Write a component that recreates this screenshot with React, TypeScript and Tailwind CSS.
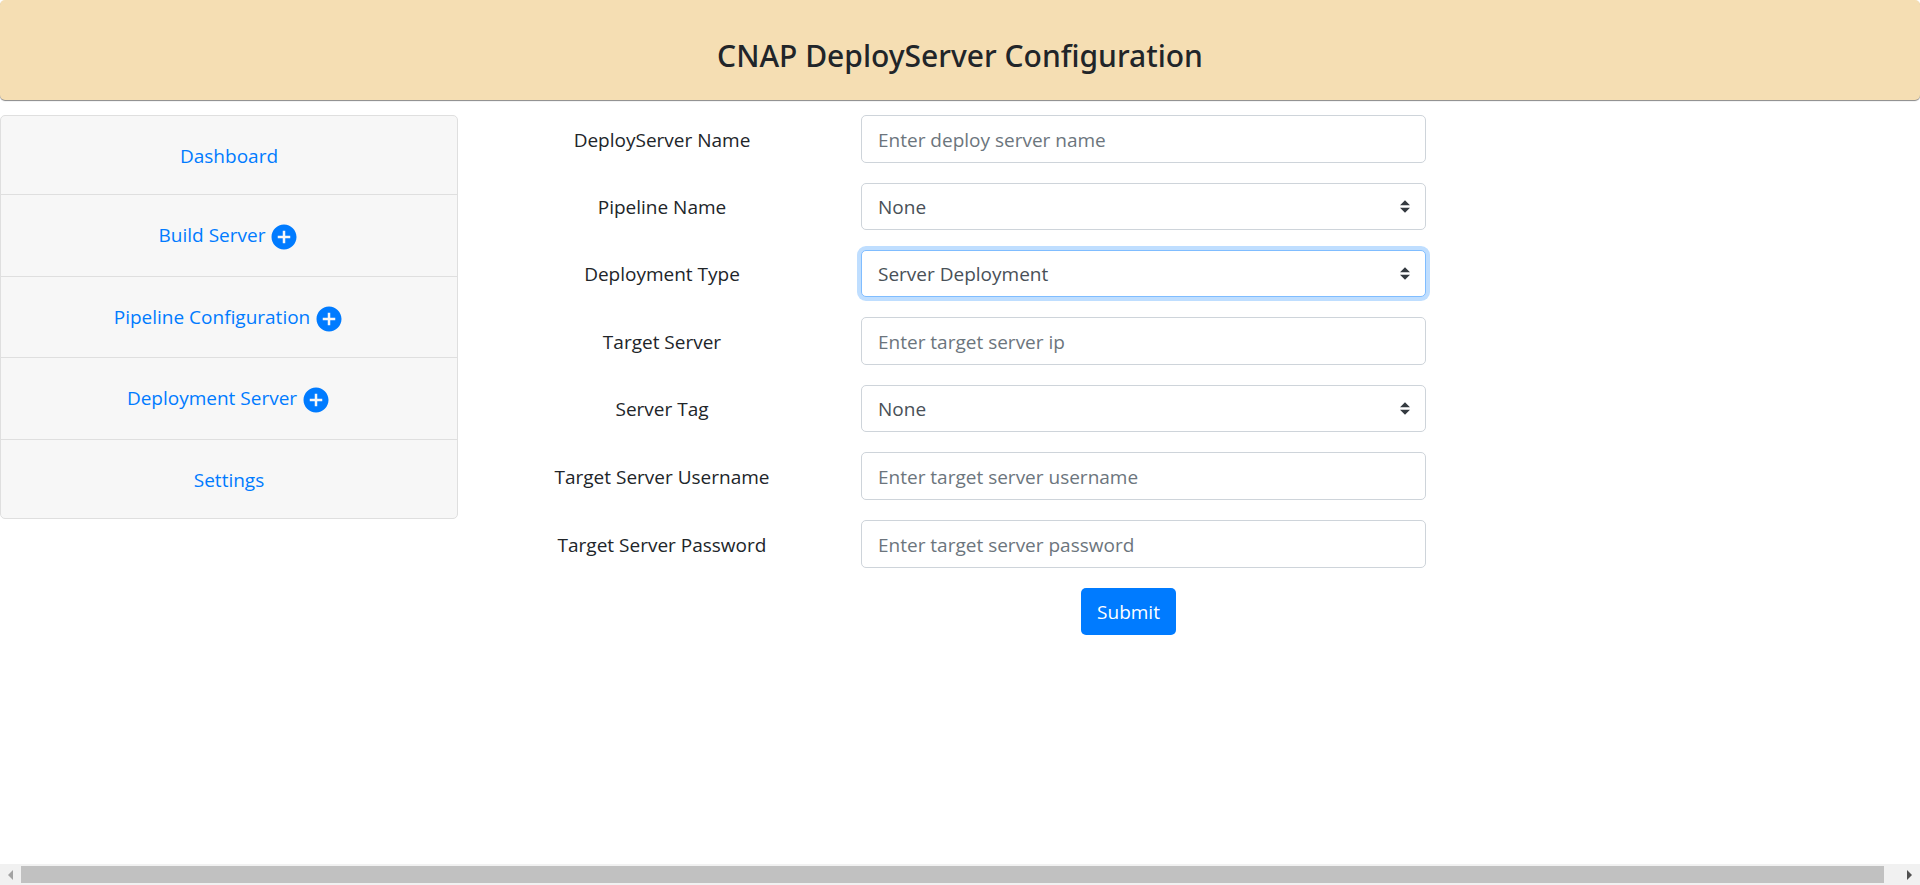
import { MdAddCircle } from "react-icons/md";

type Field = {
  id: string;
  label: string;
  kind: "text" | "password" | "select";
  placeholder?: string;
  options?: string[];
  active?: boolean;
};

const fields: Field[] = [
  { id: "name", label: "DeployServer Name", kind: "text", placeholder: "Enter deploy server name" },
  { id: "pipeline", label: "Pipeline Name", kind: "select", options: ["None"] },
  { id: "type", label: "Deployment Type", kind: "select", options: ["Server Deployment"], active: true },
  { id: "target", label: "Target Server", kind: "text", placeholder: "Enter target server ip" },
  { id: "tag", label: "Server Tag", kind: "select", options: ["None"] },
  { id: "username", label: "Target Server Username", kind: "text", placeholder: "Enter target server username" },
  { id: "password", label: "Target Server Password", kind: "password", placeholder: "Enter target server password" },
];

const links = [
  { label: "Dashboard", size: "h-[79px] pt-0.5", add: false },
  { label: "Build Server", size: "h-[82px] pb-px", add: true },
  { label: "Pipeline Configuration", size: "h-[81px] pb-px", add: true },
  { label: "Deployment Server", size: "h-[82px] pb-px", add: true },
  { label: "Settings", size: "h-[78px] pt-0.5", add: false },
];

function Sidebar() {
  return (
    <nav className="rounded-[5px] border border-[#dfdfdf] bg-[#f7f7f7]">
      <ul className="divide-y divide-[#dfdfdf]">
        {links.map((link) => (
          <li key={link.label} className={`flex items-center justify-center ${link.size}`}>
            <a href="#" className="flex items-center gap-1 text-[#007bff]">
              {link.label}
              {link.add && <MdAddCircle className="mt-1 size-[30px]" aria-hidden="true" />}
            </a>
          </li>
        ))}
      </ul>
    </nav>
  );
}

function SelectField({ field }: { field: Field }) {
  const ring = field.active ? "border-[#80bdff] ring-4 ring-[#bfdeff]" : "border-[#ced4da]";
  return (
    <div className="relative">
      <select
        id={field.id}
        className={`block h-[47px] w-full appearance-none rounded-[5px] border bg-white px-4 text-[#495057] outline-none ${ring}`}
      >
        {field.options?.map((option) => (
          <option key={option}>{option}</option>
        ))}
      </select>
      <svg
        viewBox="0 0 4 5"
        className="pointer-events-none absolute inset-y-0 right-4 my-auto h-[13px] w-[10px]"
        aria-hidden="true"
      >
        <path fill="#343a40" d="M2 0L0 2h4zm0 5L0 3h4z" />
      </svg>
    </div>
  );
}

function DeployForm() {
  return (
    <form className="flex flex-col gap-5" onSubmit={(event) => event.preventDefault()}>
      {fields.map((field) => (
        <div key={field.id} className="grid grid-cols-[398fr_565fr_494fr]">
          <label htmlFor={field.id} className="self-center pt-px text-center">
            {field.label}
          </label>
          {field.kind === "select" ? (
            <SelectField field={field} />
          ) : (
            <input
              id={field.id}
              type={field.kind}
              placeholder={field.placeholder}
              className="h-12 w-full rounded-[5px] border border-[#ced4da] px-4 pt-0.5 text-[#495057] outline-none placeholder:text-[#6c757d]"
            />
          )}
        </div>
      ))}
      <div className="grid grid-cols-[398fr_565fr_494fr]">
        <div className="col-start-2 flex justify-center pr-[30px]">
          <button type="submit" className="h-[47px] rounded-[5px] bg-[#007bff] px-4 text-white">
            Submit
          </button>
        </div>
      </div>
    </form>
  );
}

function ScrollBar() {
  return (
    <div className="mt-auto flex h-[21px] items-center bg-[#f1f1f1]" aria-hidden="true">
      <svg viewBox="0 0 21 21" className="size-[21px]">
        <path fill="#a3a3a3" d="M13 6v10l-5-5z" />
      </svg>
      <div className="h-[17px] flex-1 bg-[#c1c1c1]" />
      <svg viewBox="0 0 36 21" className="h-[21px] w-9">
        <path fill="#505050" d="M23 6v10l5-5z" />
      </svg>
    </div>
  );
}

export default function App() {
  return (
    <div className="flex min-h-screen flex-col bg-white font-['Segoe_UI','Open_Sans',sans-serif] text-[19px] leading-[30px] text-[#212529]">
      <header className="flex h-[100px] items-center justify-center rounded-[5px] bg-[#f5deb3] pt-3 shadow-[0_1px_1px_#888888]">
        <h1 className="font-['Segoe_UI','Noto_Sans',sans-serif] text-[30px] leading-9 font-medium text-[#212529]">
          CNAP DeployServer Configuration
        </h1>
      </header>
      <main className="grid grid-cols-[458fr_1457fr] items-start gap-[5px] pt-[15px]">
        <Sidebar />
        <DeployForm />
      </main>
      <ScrollBar />
    </div>
  );
}
